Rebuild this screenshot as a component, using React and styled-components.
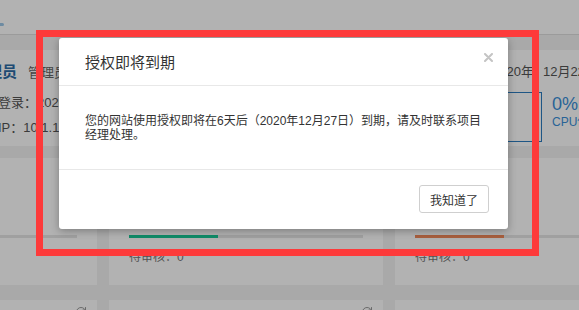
import React from 'react';
import styled, { createGlobalStyle } from 'styled-components';
import { RotateCw } from 'lucide-react';

const Global = createGlobalStyle`
  html, body { margin: 0; padding: 0; }
  body {
    width: 579px;
    height: 310px;
    overflow: hidden;
    background: #f2f2f2;
    font-family: "Liberation Sans", "Noto Sans CJK SC", sans-serif;
  }
`;

const Page = styled.div`
  position: relative;
  width: 579px;
  height: 310px;
  overflow: hidden;
  background: #f2f2f2;
`;

const TopBar = styled.header`
  height: 34px;
  background: #fff;
  border-bottom: 1px solid #dedede;
  display: flex;
  align-items: flex-end;
`;

const TabMark = styled.span`
  width: 4px;
  height: 3px;
  margin-bottom: 8px;
  background: #9cc7e8;
  border-radius: 0 2px 2px 0;
`;

const Content = styled.main`
  margin-left: -177px;
  width: 846px;
  padding-top: 15px;
  display: flex;
  flex-direction: column;
  gap: 12px;
`;

const TopCard = styled.section`
  height: 96px;
  background: #fff;
  display: flex;
  padding: 0 20px;
  box-sizing: border-box;
`;

const Avatar = styled.div`
  flex: 0 0 105px;
  margin-right: 24px;
  display: flex;
  align-items: center;
  justify-content: center;
  &::before {
    content: "";
    width: 64px;
    height: 64px;
    border-radius: 50%;
    background: #dfe8f1;
  }
`;

const UserInfo = styled.div`
  flex: 0 0 520px;
  padding-top: 12px;
  display: flex;
  flex-direction: column;
`;

const InfoLine = styled.div`
  line-height: 20px;
  font-size: 13px;
  color: #555;
  margin-top: ${p => p.$gap || 0}px;
  white-space: nowrap;
`;

const UserName = styled.span`
  font-size: 15px;
  font-weight: bold;
  color: #2b6aa5;
`;

const Role = styled.span`
  margin-left: 11px;
  font-size: 13px;
  color: #666;
`;

const RightInfo = styled.div`
  padding-top: 12px;
  display: flex;
  flex-direction: column;
`;

const DatePart = styled.span`
  margin-left: ${p => p.$gap || 0}px;
`;

const StatRow = styled.div`
  margin-top: 10px;
  display: flex;
  gap: 10px;
`;

const StatBox = styled.div`
  width: 50px;
  height: 50px;
  box-sizing: border-box;
  border: 1px solid #2b7bbf;
`;

const StatText = styled.div`
  padding-top: 2px;
  display: flex;
  flex-direction: column;
  color: #3a8fd8;
  white-space: nowrap;
`;

const StatValue = styled.span`
  font-size: 18px;
  line-height: 20px;
`;

const StatLabel = styled.span`
  font-size: 12px;
  line-height: 16px;
`;

const Grid = styled.div`
  display: grid;
  grid-template-columns: repeat(3, 274px);
  grid-auto-rows: 127px;
  column-gap: 12px;
  row-gap: 15px;
`;

const Card = styled.div`
  position: relative;
  background: #fff;
  padding: 20px;
  box-sizing: border-box;
  display: flex;
  flex-direction: column;
`;

const CardHead = styled.div`
  height: 58px;
  display: flex;
  flex-direction: column;
  font-size: 13px;
  color: #666;
`;

const CardValue = styled.span`
  font-size: 26px;
  color: #333;
  line-height: 34px;
`;

const Track = styled.div`
  height: 3px;
  background: #e6e6e6;
  display: flex;
`;

const Fill = styled.div`
  height: 100%;
  background: ${p => p.$color};
`;

const CardNote = styled.div`
  margin-top: 11px;
  font-size: 12px;
  line-height: 16px;
  color: #777;
`;

const RefreshIcon = styled(RotateCw)`
  position: absolute;
  top: 6px;
  right: 10px;
  color: #999;
`;

const Backdrop = styled.div`
  position: absolute;
  inset: 0;
  background: rgba(0, 0, 0, 0.3);
`;

const Dialog = styled.div`
  position: absolute;
  left: 59px;
  top: 38px;
  width: 449px;
  background: #fff;
  border-radius: 3px;
  box-shadow: 0 2px 8px rgba(0, 0, 0, 0.3);
  display: flex;
  flex-direction: column;
`;

const DialogHeader = styled.div`
  position: relative;
  height: 48px;
  box-sizing: border-box;
  padding-left: 26px;
  display: flex;
  align-items: center;
  border-bottom: 1px solid #e8e8e8;
  font-size: 15px;
  color: #333;
`;

const CloseButton = styled.button`
  position: absolute;
  top: 15px;
  right: 15px;
  width: 9px;
  height: 9px;
  padding: 0;
  border: 0;
  background: none;
  display: flex;
  cursor: pointer;
`;

const DialogBody = styled.div`
  padding: 28px 26px 27px;
  font-size: 12px;
  line-height: 14px;
  color: #333;
  white-space: nowrap;
`;

const DialogFooter = styled.div`
  border-top: 1px solid #e8e8e8;
  padding: 15px 19px 16px;
  display: flex;
  justify-content: flex-end;
`;

const OkButton = styled.button`
  width: 70px;
  height: 28px;
  border: 1px solid #cfcfcf;
  border-radius: 3px;
  background: #fff;
  font-family: inherit;
  font-size: 12px;
  color: #333;
  padding: 0;
  cursor: pointer;
`;

const Annotation = styled.div`
  position: absolute;
  left: 36px;
  top: 30px;
  width: 503px;
  height: 226px;
  box-sizing: border-box;
  border: 7px solid #fd3a3a;
  pointer-events: none;
`;

const cards = [
  { title: '文档', value: '0', pct: 38, color: '#5a8fd0' },
  { title: '报告', value: '0', pct: 38, color: '#18c896' },
  { title: '合同', value: '0', pct: 38, color: '#f1895a' },
];

export default function App() {
  return (
    <Page>
      <Global />
      <TopBar>
        <TabMark />
      </TopBar>
      <Content>
        <TopCard>
          <Avatar />
          <UserInfo>
            <InfoLine>
              <UserName>管理员</UserName>
              <Role>管理员</Role>
            </InfoLine>
            <InfoLine $gap={10}>上次登录：2020-12-21 09:30:12</InfoLine>
            <InfoLine $gap={5}>登录IP：10.1.1.1</InfoLine>
          </UserInfo>
          <RightInfo>
            <InfoLine>
              <DatePart>2020年</DatePart>
              <DatePart $gap={9}>12月22日 星期二</DatePart>
            </InfoLine>
            <StatRow>
              <StatBox />
              <StatText>
                <StatValue>0%</StatValue>
                <StatLabel>CPU使用率</StatLabel>
              </StatText>
            </StatRow>
          </RightInfo>
        </TopCard>
        <Grid>
          {cards.map(c => (
            <Card key={c.title}>
              <CardHead>
                {c.title}
                <CardValue>{c.value}</CardValue>
              </CardHead>
              <Track>
                <Fill $color={c.color} style={{ width: `${c.pct}%` }} />
              </Track>
              <CardNote>待审核：0</CardNote>
            </Card>
          ))}
          {cards.map(c => (
            <Card key={'r' + c.title}>
              <RefreshIcon size={12} strokeWidth={2} />
            </Card>
          ))}
        </Grid>
      </Content>
      <Backdrop />
      <Dialog>
        <DialogHeader>
          授权即将到期
          <CloseButton aria-label="关闭">
            <svg width="9" height="9" viewBox="0 0 9 9">
              <path d="M1 1 L8 8 M8 1 L1 8" stroke="#c4c4c4" strokeWidth="2" strokeLinecap="round" />
            </svg>
          </CloseButton>
        </DialogHeader>
        <DialogBody>
          您的网站使用授权即将在6天后（2020年12月27日）到期，请及时联系项目
          <br />
          经理处理。
        </DialogBody>
        <DialogFooter>
          <OkButton>我知道了</OkButton>
        </DialogFooter>
      </Dialog>
      <Annotation />
    </Page>
  );
}
